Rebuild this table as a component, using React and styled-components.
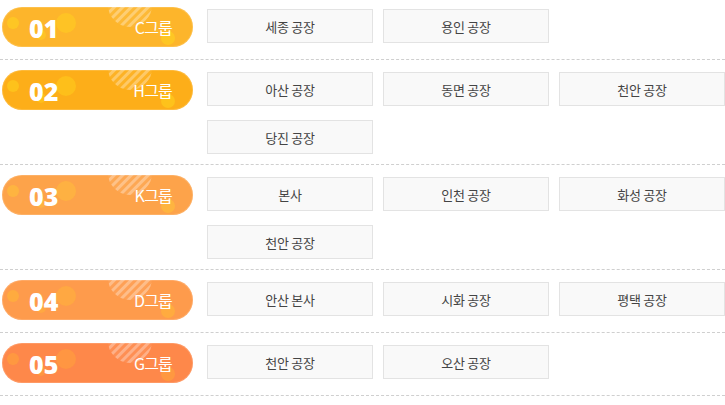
import React from 'react';
import styled, { createGlobalStyle } from 'styled-components';

const groups = [
  { no: '01', name: 'C그룹', color: '#fdb52b', dot: '#ffd21f', plants: ['세종 공장', '용인 공장'] },
  { no: '02', name: 'H그룹', color: '#fdae19', dot: '#ffcf1c', plants: ['아산 공장', '동면 공장', '천안 공장', '당진 공장'] },
  { no: '03', name: 'K그룹', color: '#fda34a', dot: '#ffbf3a', plants: ['본사', '인천 공장', '화성 공장', '천안 공장'] },
  { no: '04', name: 'D그룹', color: '#fe9b4c', dot: '#ffb637', plants: ['안산 본사', '시화 공장', '평택 공장'] },
  { no: '05', name: 'G그룹', color: '#fe884a', dot: '#ffa33a', plants: ['천안 공장', '오산 공장'] },
];

function Deco({ dot, id }) {
  return (
    <DecoSvg width="190" height="40" viewBox="0 0 190 40">
      <defs>
        <pattern id={id} width="6" height="6" patternUnits="userSpaceOnUse" patternTransform="rotate(-45)">
          <rect width="6" height="3" fill="rgba(255,255,255,0.3)" />
        </pattern>
      </defs>
      <circle cx="128" cy="-2" r="22" fill={`url(#${id})`} />
      <circle cx="128" cy="-2" r="22" fill="rgba(255,255,255,0.06)" />
      <circle cx="11" cy="16" r="6" fill={dot} opacity="0.6" />
      <circle cx="64" cy="16" r="10" fill={dot} opacity="0.5" />
      <circle cx="39" cy="28" r="5" fill={dot} opacity="0.5" />
      <circle cx="166" cy="31" r="7" fill={dot} opacity="0.6" />
    </DecoSvg>
  );
}

function App() {
  return (
    <>
      <GlobalStyle />
      <List>
        {groups.map((g, i) => (
          <Row key={g.no} first={i === 0}>
            <Pill bg={g.color}>
              <Deco dot={g.dot} id={`stripe${i}`} />
              <Num>{g.no}</Num>
              <Name>{g.name}</Name>
            </Pill>
            <Plants>
              {g.plants.map((p, j) => (
                <Plant key={j}>{p}</Plant>
              ))}
            </Plants>
          </Row>
        ))}
      </List>
    </>
  );
}

export default App;

const GlobalStyle = createGlobalStyle`
  body {
    margin: 0;
    background: #fff;
    font-family: "Noto Sans CJK KR", "Noto Sans", sans-serif;
  }
`;

const List = styled.div`
  width: 725px;
`;

const Row = styled.div`
  display: flex;
  align-items: flex-start;
  gap: 14px;
  padding: ${p => (p.first ? '7px' : '10px')} 0 10px 2px;
  border-bottom: 1px dashed #cfcfcf;
`;

const Pill = styled.div`
  position: relative;
  overflow: hidden;
  flex: 0 0 191px;
  height: 40px;
  margin-bottom: 2px;
  border-radius: 20px;
  background: ${p => p.bg};
  box-shadow: inset 0 0 0 1px rgba(255, 255, 255, 0.15);
  display: flex;
  align-items: center;
  justify-content: space-between;
  padding: 0 21px 0 27px;
  box-sizing: border-box;
  color: #fff;
`;

const DecoSvg = styled.svg`
  position: absolute;
  left: 0;
  top: 0;
`;

const Num = styled.span`
  position: relative;
  font-family: "Open Sans", "Noto Sans", sans-serif;
  font-weight: 800;
  font-size: 25px;
  line-height: 1;
  margin-top: 2px;
`;

const Name = styled.span`
  position: relative;
  font-size: 16px;
  line-height: 1;
  letter-spacing: -0.8px;
`;

const Plants = styled.div`
  display: grid;
  grid-template-columns: repeat(3, 166px);
  column-gap: 10px;
  row-gap: 14px;
  margin-top: 2px;
`;

const Plant = styled.div`
  height: 34px;
  box-sizing: border-box;
  border: 1px solid #e3e3e3;
  background: #f9f9f9;
  color: #444;
  font-size: 13px;
  letter-spacing: -0.3px;
  display: flex;
  align-items: center;
  justify-content: center;
`;
